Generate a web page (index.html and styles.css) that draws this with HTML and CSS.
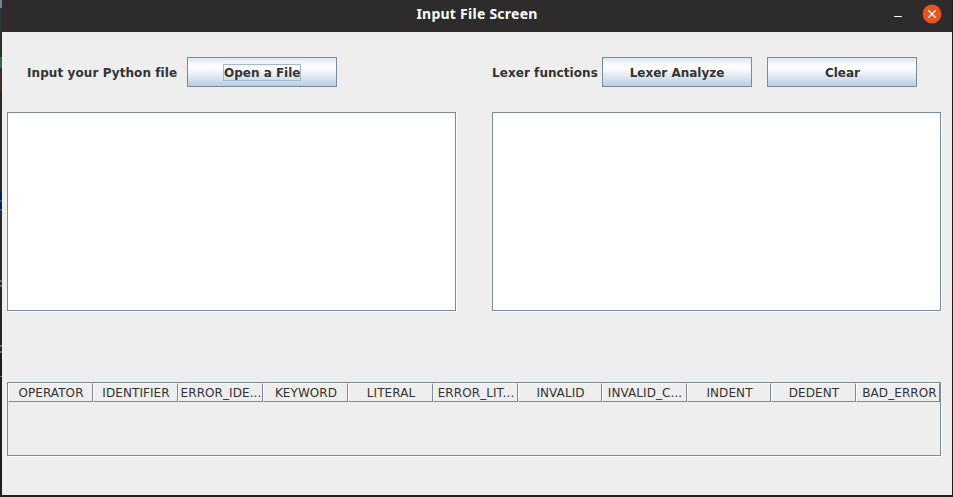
FILE: index.html
```html
<!DOCTYPE html>
<html lang="en">
<head>
<meta charset="utf-8">
<title>Input File Screen</title>
<link rel="stylesheet" href="styles.css">
</head>
<body>
<div class="window">
  <header class="titlebar">
    <h1 class="title">Input File Screen</h1>
    <div class="controls">
      <span class="minimize"></span>
      <svg class="close" width="20" height="20" viewBox="0 0 20 20">
        <circle cx="10" cy="10" r="9.4" fill="#e95420"/>
        <path d="M6.3 6.3l7.4 7.4M13.7 6.3l-7.4 7.4" stroke="#fff" stroke-width="1.3" fill="none"/>
      </svg>
    </div>
  </header>
  <main class="content">
    <div class="panels">
      <section class="panel">
        <div class="toolbar input-tools">
          <span class="label label-input">Input your Python file</span>
          <button class="button"><span class="focus">Open a File</span></button>
        </div>
        <div class="textarea"></div>
      </section>
      <section class="panel">
        <div class="toolbar">
          <span class="label label-lexer">Lexer functions</span>
          <button class="button">Lexer Analyze</button>
          <button class="button clear">Clear</button>
        </div>
        <div class="textarea"></div>
      </section>
    </div>
    <div class="table">
      <div class="head">
        <span>OPERATOR</span><span>IDENTIFIER</span><span>ERROR_IDE...</span><span>KEYWORD</span><span>LITERAL</span><span>ERROR_LIT...</span><span>INVALID</span><span>INVALID_C...</span><span>INDENT</span><span>DEDENT</span><span>BAD_ERROR</span>
      </div>
    </div>
  </main>
</div>
</body>
</html>
```
FILE: styles.css
```css
* { box-sizing: border-box; }
body {
  margin: 0;
  height: 497px;
  padding: 0 1px 2px 2px;
  overflow: hidden;
  /* sliver of the desktop visible left of the window */
  background:
    linear-gradient(#778089 0 8px, #2c3033 8px 57px, #2f6b38 57px 68px, #2c2e30 68px 72px, #3a302b 72px 92px, #29292c 92px 192px, #06244a 192px 200px, #1a5c98 200px 202px, #06244a 202px 209px, #1a5c98 209px 211px, #29292c 211px 280px, #706a66 280px 282px, #29292c 282px 285px, #706a66 285px 287px, #252427 287px 345px, #706a66 345px 347px, #29292c 347px 351px, #706a66 351px 353px, #201e20 353px 376px, #77705a 376px 377px, #201e20 377px) 0 0 / 2px 100% no-repeat,
    #201e20;
  color: #333;
  font-family: "DejaVu Sans", sans-serif;
  font-size: 12px;
}
.window { height: 495px; background: #eee; }
.titlebar {
  display: grid;
  grid-template-columns: 1fr auto 1fr;
  height: 32px;
  background: #2d2b2b;
}
.title {
  grid-column: 2;
  margin: 0;
  font: bold 14px/27px "Noto Sans", sans-serif;
  letter-spacing: 0.25px;
  color: #fff;
}
.controls { display: flex; justify-content: flex-end; padding: 4px 10px 0 0; }
.minimize { width: 8px; height: 1px; margin: 12px 20px 0 0; background: #fff; }
.content { padding: 25px 11px 0 5px; }
.panels { display: flex; gap: 36px; }
.panel { width: 449px; }
.toolbar { display: flex; align-items: center; height: 30px; margin-bottom: 25px; }
.input-tools { padding-left: 20px; }
.label { font-weight: bold; white-space: nowrap; line-height: 30px; letter-spacing: 0.08px; padding-top: 2px; }
.label-input { width: 160px; }
.label-lexer { width: 110px; letter-spacing: 0.06px; }
.button {
  flex: none;
  width: 150px;
  height: 30px;
  padding: 2px 0 0;
  border: 1px solid #7a8a99;
  background: linear-gradient(#dde8f3, #fff 30%, #fff 36%, #b8cfe5);
  color: #333;
  font: bold 12px "DejaVu Sans", sans-serif;
}
.clear { margin-left: 15px; padding-left: 1px; }
.focus {
  display: block;
  width: 78px;
  height: 17px;
  margin: -2px auto 0 35px;
  padding-top: 1px;
  line-height: 15px;
  white-space: nowrap;
  border: 1px solid #a3b8cc;
}
.textarea {
  height: 199px;
  border: 1px solid #7a8a99;
  background: #fff;
  box-shadow: 1px 1px #fff;
}
.table {
  width: 934px;
  height: 74px;
  margin-top: 71px;
  border: 1px solid #7a8a99;
  box-shadow: 1px 1px #fff;
}
.head {
  display: grid;
  grid-template-columns: repeat(6, 85px) 84px 85px 84px 85px 84px;
  height: 19px;
}
.head span {
  height: 19px;
  border: 1px solid #7a8a99;
  border-top-color: #fff;
  border-left-color: #fff;
  padding-left: 1px;
  line-height: 18px;
  letter-spacing: 0.08px;
  text-align: center;
  white-space: nowrap;
}
.head span:last-child { padding-left: 3px; }
```
